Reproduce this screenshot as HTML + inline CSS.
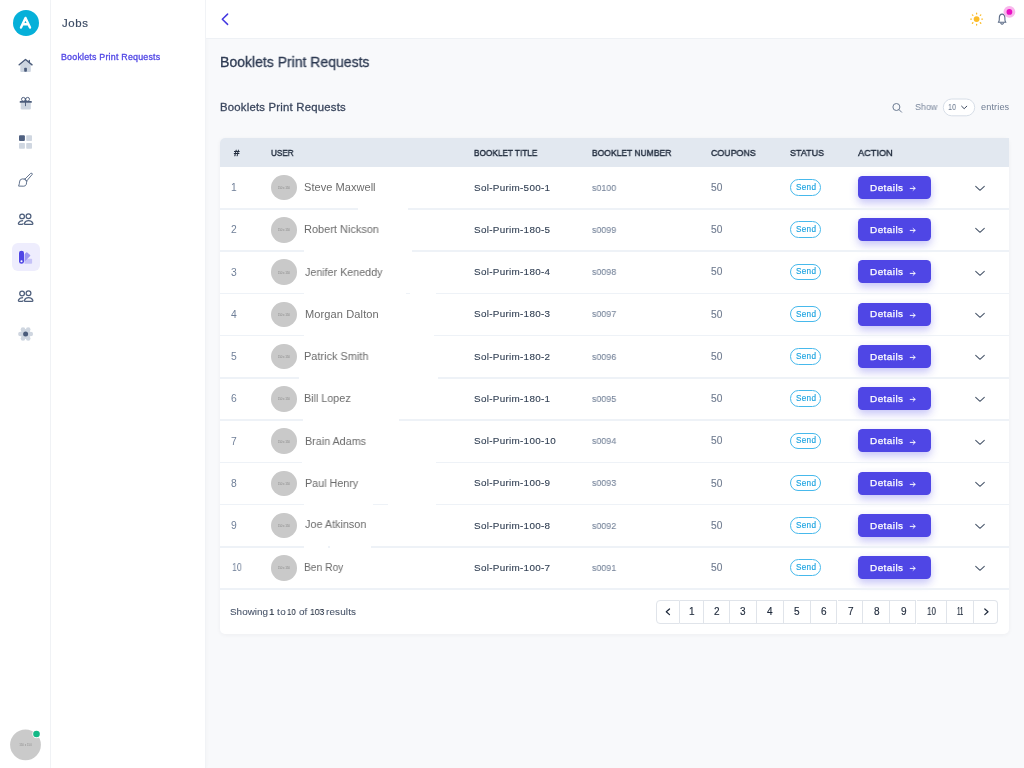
<!DOCTYPE html>
<html><head><meta charset="utf-8"><style>
*{margin:0;padding:0;box-sizing:border-box}
html,body{width:1024px;height:768px;overflow:hidden;background:#f8f9fb;font-family:"Liberation Sans",sans-serif}
.a{position:absolute;white-space:nowrap;will-change:transform}
#rail{position:absolute;left:0;top:0;width:51px;height:768px;background:#fff;border-right:1.5px solid #f1f3f6}
#side{position:absolute;left:51px;top:0;width:155px;height:768px;background:#fff;border-right:1px solid #f1f3f6;box-shadow:1px 0 3px rgba(30,41,59,.025)}
#hdr{position:absolute;left:206px;top:0;width:818px;height:38.5px;background:#fff;border-bottom:1px solid #eef1f5}
.logo{position:absolute;left:12.5px;top:10px;width:26px;height:26px;border-radius:50%;background:#06b0d9}
.act{position:absolute;left:12px;top:243px;width:28px;height:28px;border-radius:6px;background:#eeedfd}
.card{position:absolute;left:220px;top:138px;width:788.5px;height:496px;background:#fff;border-radius:5px;box-shadow:0 1px 4px rgba(30,41,59,.05)}
.th{position:absolute;left:220px;top:138px;width:788.5px;height:28.5px;background:#e2e8f0;border-radius:5px 0 0 0}
.rb{position:absolute;left:220px;width:788.5px;height:1.5px;background:#eef2f7}
.gap{position:absolute;height:3px;background:#fff}
.av{position:absolute;left:271.2px;width:25.6px;height:25.6px;border-radius:50%;background:#c9c9c9}
.badge{position:absolute;left:789.8px;width:31.3px;height:16.7px;border:1px solid #47b9ec;border-radius:9px}
.btn{position:absolute;left:857.5px;width:73px;height:23px;border-radius:4.5px;background:#4f46e5;box-shadow:0 4px 9px rgba(79,70,229,.32)}
.pg{position:absolute;top:599.6px;height:24.2px;border:1px solid #e0e4ea;border-left:0;background:#fff}

</style></head><body>
<div id="rail">
  <div class="logo"></div>
  <div class="act"></div>
</div>
<svg class="a" style="left:0;top:0" width="51" height="768" viewBox="0 0 51 768">
  <!-- A -->
  <path d="M21 27.6L25.5 17.9L30 27.6M22.6 24.2H28.4" stroke="#fff" stroke-width="2.4" fill="none" stroke-linecap="round" stroke-linejoin="round"/>
  <!-- house -->
  <path d="M20.3 65L25.5 60.5L30.8 65V71Q30.8 72 29.8 72H21.3Q20.3 72 20.3 71Z" fill="#cdd5e0"/>
  <path d="M19.2 64.8L25.5 59.5L32 64.8" stroke="#4a5b7a" stroke-width="1.5" fill="none" stroke-linecap="round" stroke-linejoin="round"/>
  <path d="M29.4 60.3V62.6" stroke="#4a5b7a" stroke-width="1.2" stroke-linecap="round"/>
  <rect x="24.2" y="67.8" width="2.7" height="4" rx="0.8" fill="#4a5b7a"/>
  <!-- gift -->
  <path d="M20.7 102.5H30.8V108.3Q30.8 109.5 29.6 109.5H21.9Q20.7 109.5 20.7 108.3Z" fill="#cdd5e0"/>
  <circle cx="23.4" cy="99.3" r="1.9" stroke="#4a5b7a" stroke-width="0.95" fill="none"/>
  <circle cx="27.6" cy="99.3" r="1.9" stroke="#4a5b7a" stroke-width="0.95" fill="none"/>
  <rect x="19.7" y="101" width="12.1" height="1.8" rx="0.5" fill="#4a5b7a"/>
  <rect x="25.1" y="98.3" width="0.9" height="7.8" fill="#4a5b7a"/>
  <!-- grid -->
  <rect x="19" y="135.2" width="5.9" height="5.9" rx="1" fill="#4f6080"/>
  <rect x="26.2" y="135.2" width="5.8" height="5.9" rx="0.8" fill="#d0d7e1"/>
  <rect x="19" y="143" width="5.9" height="5.8" rx="0.8" fill="#d0d7e1"/>
  <rect x="26.2" y="143" width="5.8" height="5.8" rx="0.8" fill="#d0d7e1"/>
  <!-- brush -->
  <path d="M18.6 186.1Q19.6 183.5 19.5 182Q19.6 179.2 22.2 178.9L24.8 179.2L26.5 181.2Q26.7 183 26.3 184.3Q25.6 186.2 23.8 186.2Z" stroke="#5a6b88" stroke-width="0.95" fill="none" stroke-linejoin="round"/>
  <path d="M24.8 179.2L30.6 173.4Q32.3 172.6 32.4 174.2L26.5 181.2" stroke="#5a6b88" stroke-width="0.95" fill="none" stroke-linejoin="round"/>
  <path d="M24.2 178.4L27.2 181.4" stroke="#5a6b88" stroke-width="0.9"/>
  <!-- users -->
  <g stroke="#4e5f7c" stroke-width="1.25" fill="none">
    <circle cx="22.1" cy="216.4" r="2.35"/>
    <circle cx="28.5" cy="216.2" r="2.4"/>
    <path d="M25 224.3H32.2Q33.2 224.3 32.7 223.1Q31.6 220.6 28.5 220.6Q25.5 220.6 24.6 223Q24.2 224.3 25 224.3Z"/>
    <path d="M23.1 220.6Q19.5 220.8 18.5 223.1Q18.1 224.3 19.2 224.3H22.2Q23 224.3 23.1 223.3"/>
  </g>
  <g stroke="#4e5f7c" stroke-width="1.25" fill="none" transform="translate(0,77)">
    <circle cx="22.1" cy="216.4" r="2.35"/>
    <circle cx="28.5" cy="216.2" r="2.4"/>
    <path d="M25 224.3H32.2Q33.2 224.3 32.7 223.1Q31.6 220.6 28.5 220.6Q25.5 220.6 24.6 223Q24.2 224.3 25 224.3Z"/>
    <path d="M23.1 220.6Q19.5 220.8 18.5 223.1Q18.1 224.3 19.2 224.3H22.2Q23 224.3 23.1 223.3"/>
  </g>
  <!-- swatch -->
  <rect x="24.3" y="258.8" width="7.8" height="5" rx="0.8" fill="#c5c2f7"/>
  <path d="M24.3 254.4L26.1 252.5Q26.7 251.9 27.3 252.5L30.1 255.1Q30.6 255.6 30.1 256.1L24.3 262Z" fill="#9d98f1"/>
  <rect x="18.5" y="250.3" width="6" height="14" rx="3" fill="#fff" opacity=".7"/>
  <rect x="19" y="250.8" width="5" height="13" rx="2.3" fill="#4f46e5"/>
  <circle cx="21.5" cy="261.2" r="1.05" fill="#fff"/>
  <!-- gear -->
  <g fill="#cfd6e0">
    <circle cx="25.6" cy="334" r="5"/>
    <circle cx="20.4" cy="334" r="2.3"/><circle cx="30.8" cy="334" r="2.3"/>
    <circle cx="23" cy="329.5" r="2.3"/><circle cx="28.2" cy="329.5" r="2.3"/>
    <circle cx="23" cy="338.5" r="2.3"/><circle cx="28.2" cy="338.5" r="2.3"/>
  </g>
  <circle cx="25.6" cy="334" r="2.5" fill="#4a5b7a"/>
  <!-- avatar bottom -->
  <circle cx="25.5" cy="744.8" r="15.4" fill="#cacaca"/>
  <text x="25.5" y="746" font-size="2.9" fill="#8f8f8f" text-anchor="middle" font-family="Liberation Sans">150 x 150</text>
  <circle cx="36.5" cy="734" r="4.2" fill="#fff"/>
  <circle cx="36.5" cy="734" r="3.3" fill="#12b886"/>
</svg>
<div id="side"></div>
<div id="hdr"></div>
<!-- header icons -->
<svg class="a" style="left:206px;top:0" width="818" height="38" viewBox="206 0 818 38">
  <path d="M227.6 14.1L222.3 19.3L227.6 24.4" stroke="#4338e0" stroke-width="1.5" fill="none" stroke-linecap="round" stroke-linejoin="round"/>
  <g stroke="#fbbc2a" stroke-width="1.3" stroke-linecap="round">
    <path d="M976.6 13.2V13.9M976.6 24.3V25M970.7 19.1H971.4M981.8 19.1H982.5M972.4 14.9L972.9 15.4M980.3 22.8L980.8 23.3M972.4 23.3L972.9 22.8M980.3 15.4L980.8 14.9"/>
  </g>
  <circle cx="976.6" cy="19.1" r="2.9" fill="#fbbc2a"/>
  <path d="M998.3 22.3Q999.3 21.3 999.3 19.5V18.2Q999.3 14.1 1002.1 14.1Q1004.9 14.1 1004.9 18.2V19.5Q1004.9 21.3 1005.9 22.3Z" stroke="#5a6a85" stroke-width="1.1" fill="none" stroke-linejoin="round"/>
  <path d="M1000.8 23.2Q1002.1 25.4 1003.4 23.2" stroke="#5a6a85" stroke-width="1.1" fill="none" stroke-linecap="round"/>
  <circle cx="1009.4" cy="11.9" r="5.9" fill="#f9b6ec"/>
  <circle cx="1009.4" cy="11.9" r="2.9" fill="#ea10c3"/>
</svg>
<!-- search & select -->
<svg class="a" style="left:888px;top:98px" width="90" height="20" viewBox="888 98 90 20">
  <circle cx="896.4" cy="107" r="3.5" stroke="#6b7a91" stroke-width="1" fill="none"/>
  <path d="M899 109.6L901.6 112.2" stroke="#6b7a91" stroke-width="1" stroke-linecap="round"/>
  <rect x="943.3" y="99" width="31.4" height="16.8" rx="8.4" fill="#fff" stroke="#d3dae4" stroke-width="0.9"/>
  <path d="M961.6 106.2L964.2 108.7L966.8 106.2" stroke="#3d4a60" stroke-width="1" fill="none" stroke-linecap="round" stroke-linejoin="round"/>
</svg>
<div class="card"></div>
<div class="th"></div>
<!-- pagination -->
<div class="pg" style="left:655.5px;width:24px;border-left:1px solid #e0e4ea;border-radius:4px 0 0 4px"></div>
<div class="pg" style="left:679.5px;width:24.2px"></div>
<div class="pg" style="left:703.7px;width:26px"></div>
<div class="pg" style="left:729.7px;width:26.9px"></div>
<div class="pg" style="left:756.6px;width:27px"></div>
<div class="pg" style="left:783.6px;width:27.1px"></div>
<div class="pg" style="left:810.7px;width:26.8px"></div>
<div class="pg" style="left:837.5px;width:25.5px"></div>
<div class="pg" style="left:863px;width:26.6px"></div>
<div class="pg" style="left:889.6px;width:26.9px"></div>
<div class="pg" style="left:916.5px;width:30.1px"></div>
<div class="pg" style="left:946.6px;width:27.7px"></div>
<div class="pg" style="left:974.3px;width:24px;border-radius:0 4px 4px 0"></div>
<svg class="a" style="left:655px;top:599px" width="345" height="26" viewBox="655 599 345 26">
  <path d="M669.5 609L666.3 611.8L669.5 614.6" stroke="#1e293b" stroke-width="1.25" fill="none" stroke-linecap="round" stroke-linejoin="round"/>
  <path d="M984.8 609L988 611.8L984.8 614.6" stroke="#1e293b" stroke-width="1.25" fill="none" stroke-linecap="round" stroke-linejoin="round"/>
</svg>

<div class="av" style="top:174.80px"></div><div class="a" style="left:271.2px;width:25.6px;text-align:center;top:186.00px;font-size:3px;line-height:5px;color:#8a8a8a;letter-spacing:-0.1px">150 x 150</div>
<div class="badge" style="top:179.00px"></div>
<div class="btn" style="top:175.90px"></div>
<svg class="a" style="left:907px;top:184.00px" width="10" height="8" viewBox="0 0 10 8"><path d="M3.2 4.4H8.1M6.1 2.5L8.1 4.4L6.1 6.3" stroke="#fff" stroke-width="0.95" fill="none" stroke-linecap="round" stroke-linejoin="round"/></svg>
<svg class="a" style="left:974px;top:183.00px" width="12" height="10" viewBox="0 0 12 10"><path d="M1.7 3.3L6 7.3L10.3 3.3" stroke="#475569" stroke-width="1.05" fill="none" stroke-linecap="round" stroke-linejoin="round"/></svg>
<div class="rb" style="top:208.00px"></div>
<div class="gap" style="top:207.25px;left:358px;width:50.0px"></div>
<div class="av" style="top:217.05px"></div><div class="a" style="left:271.2px;width:25.6px;text-align:center;top:228.25px;font-size:3px;line-height:5px;color:#8a8a8a;letter-spacing:-0.1px">150 x 150</div>
<div class="badge" style="top:221.25px"></div>
<div class="btn" style="top:218.15px"></div>
<svg class="a" style="left:907px;top:226.25px" width="10" height="8" viewBox="0 0 10 8"><path d="M3.2 4.4H8.1M6.1 2.5L8.1 4.4L6.1 6.3" stroke="#fff" stroke-width="0.95" fill="none" stroke-linecap="round" stroke-linejoin="round"/></svg>
<svg class="a" style="left:974px;top:225.25px" width="12" height="10" viewBox="0 0 12 10"><path d="M1.7 3.3L6 7.3L10.3 3.3" stroke="#475569" stroke-width="1.05" fill="none" stroke-linecap="round" stroke-linejoin="round"/></svg>
<div class="rb" style="top:250.25px"></div>
<div class="gap" style="top:249.50px;left:304px;width:108.0px"></div>
<div class="av" style="top:259.30px"></div><div class="a" style="left:271.2px;width:25.6px;text-align:center;top:270.50px;font-size:3px;line-height:5px;color:#8a8a8a;letter-spacing:-0.1px">150 x 150</div>
<div class="badge" style="top:263.50px"></div>
<div class="btn" style="top:260.40px"></div>
<svg class="a" style="left:907px;top:268.50px" width="10" height="8" viewBox="0 0 10 8"><path d="M3.2 4.4H8.1M6.1 2.5L8.1 4.4L6.1 6.3" stroke="#fff" stroke-width="0.95" fill="none" stroke-linecap="round" stroke-linejoin="round"/></svg>
<svg class="a" style="left:974px;top:267.50px" width="12" height="10" viewBox="0 0 12 10"><path d="M1.7 3.3L6 7.3L10.3 3.3" stroke="#475569" stroke-width="1.05" fill="none" stroke-linecap="round" stroke-linejoin="round"/></svg>
<div class="rb" style="top:292.50px"></div>
<div class="gap" style="top:291.75px;left:304px;width:102.4px"></div>
<div class="gap" style="top:291.75px;left:410px;width:26.0px"></div>
<div class="av" style="top:301.55px"></div><div class="a" style="left:271.2px;width:25.6px;text-align:center;top:312.75px;font-size:3px;line-height:5px;color:#8a8a8a;letter-spacing:-0.1px">150 x 150</div>
<div class="badge" style="top:305.75px"></div>
<div class="btn" style="top:302.65px"></div>
<svg class="a" style="left:907px;top:310.75px" width="10" height="8" viewBox="0 0 10 8"><path d="M3.2 4.4H8.1M6.1 2.5L8.1 4.4L6.1 6.3" stroke="#fff" stroke-width="0.95" fill="none" stroke-linecap="round" stroke-linejoin="round"/></svg>
<svg class="a" style="left:974px;top:309.75px" width="12" height="10" viewBox="0 0 12 10"><path d="M1.7 3.3L6 7.3L10.3 3.3" stroke="#475569" stroke-width="1.05" fill="none" stroke-linecap="round" stroke-linejoin="round"/></svg>
<div class="rb" style="top:334.75px"></div>
<div class="gap" style="top:334.00px;left:304px;width:130.0px"></div>
<div class="av" style="top:343.80px"></div><div class="a" style="left:271.2px;width:25.6px;text-align:center;top:355.00px;font-size:3px;line-height:5px;color:#8a8a8a;letter-spacing:-0.1px">150 x 150</div>
<div class="badge" style="top:348.00px"></div>
<div class="btn" style="top:344.90px"></div>
<svg class="a" style="left:907px;top:353.00px" width="10" height="8" viewBox="0 0 10 8"><path d="M3.2 4.4H8.1M6.1 2.5L8.1 4.4L6.1 6.3" stroke="#fff" stroke-width="0.95" fill="none" stroke-linecap="round" stroke-linejoin="round"/></svg>
<svg class="a" style="left:974px;top:352.00px" width="12" height="10" viewBox="0 0 12 10"><path d="M1.7 3.3L6 7.3L10.3 3.3" stroke="#475569" stroke-width="1.05" fill="none" stroke-linecap="round" stroke-linejoin="round"/></svg>
<div class="rb" style="top:377.00px"></div>
<div class="gap" style="top:376.25px;left:298.6px;width:139.4px"></div>
<div class="av" style="top:386.05px"></div><div class="a" style="left:271.2px;width:25.6px;text-align:center;top:397.25px;font-size:3px;line-height:5px;color:#8a8a8a;letter-spacing:-0.1px">150 x 150</div>
<div class="badge" style="top:390.25px"></div>
<div class="btn" style="top:387.15px"></div>
<svg class="a" style="left:907px;top:395.25px" width="10" height="8" viewBox="0 0 10 8"><path d="M3.2 4.4H8.1M6.1 2.5L8.1 4.4L6.1 6.3" stroke="#fff" stroke-width="0.95" fill="none" stroke-linecap="round" stroke-linejoin="round"/></svg>
<svg class="a" style="left:974px;top:394.25px" width="12" height="10" viewBox="0 0 12 10"><path d="M1.7 3.3L6 7.3L10.3 3.3" stroke="#475569" stroke-width="1.05" fill="none" stroke-linecap="round" stroke-linejoin="round"/></svg>
<div class="rb" style="top:419.25px"></div>
<div class="gap" style="top:418.50px;left:303px;width:96.4px"></div>
<div class="av" style="top:428.30px"></div><div class="a" style="left:271.2px;width:25.6px;text-align:center;top:439.50px;font-size:3px;line-height:5px;color:#8a8a8a;letter-spacing:-0.1px">150 x 150</div>
<div class="badge" style="top:432.50px"></div>
<div class="btn" style="top:429.40px"></div>
<svg class="a" style="left:907px;top:437.50px" width="10" height="8" viewBox="0 0 10 8"><path d="M3.2 4.4H8.1M6.1 2.5L8.1 4.4L6.1 6.3" stroke="#fff" stroke-width="0.95" fill="none" stroke-linecap="round" stroke-linejoin="round"/></svg>
<svg class="a" style="left:974px;top:436.50px" width="12" height="10" viewBox="0 0 12 10"><path d="M1.7 3.3L6 7.3L10.3 3.3" stroke="#475569" stroke-width="1.05" fill="none" stroke-linecap="round" stroke-linejoin="round"/></svg>
<div class="rb" style="top:461.50px"></div>
<div class="gap" style="top:460.75px;left:301.7px;width:134.3px"></div>
<div class="av" style="top:470.55px"></div><div class="a" style="left:271.2px;width:25.6px;text-align:center;top:481.75px;font-size:3px;line-height:5px;color:#8a8a8a;letter-spacing:-0.1px">150 x 150</div>
<div class="badge" style="top:474.75px"></div>
<div class="btn" style="top:471.65px"></div>
<svg class="a" style="left:907px;top:479.75px" width="10" height="8" viewBox="0 0 10 8"><path d="M3.2 4.4H8.1M6.1 2.5L8.1 4.4L6.1 6.3" stroke="#fff" stroke-width="0.95" fill="none" stroke-linecap="round" stroke-linejoin="round"/></svg>
<svg class="a" style="left:974px;top:478.75px" width="12" height="10" viewBox="0 0 12 10"><path d="M1.7 3.3L6 7.3L10.3 3.3" stroke="#475569" stroke-width="1.05" fill="none" stroke-linecap="round" stroke-linejoin="round"/></svg>
<div class="rb" style="top:503.75px"></div>
<div class="gap" style="top:503.00px;left:303.75px;width:69.1px"></div>
<div class="gap" style="top:503.00px;left:387.7px;width:48.3px"></div>
<div class="av" style="top:512.80px"></div><div class="a" style="left:271.2px;width:25.6px;text-align:center;top:524.00px;font-size:3px;line-height:5px;color:#8a8a8a;letter-spacing:-0.1px">150 x 150</div>
<div class="badge" style="top:517.00px"></div>
<div class="btn" style="top:513.90px"></div>
<svg class="a" style="left:907px;top:522.00px" width="10" height="8" viewBox="0 0 10 8"><path d="M3.2 4.4H8.1M6.1 2.5L8.1 4.4L6.1 6.3" stroke="#fff" stroke-width="0.95" fill="none" stroke-linecap="round" stroke-linejoin="round"/></svg>
<svg class="a" style="left:974px;top:521.00px" width="12" height="10" viewBox="0 0 12 10"><path d="M1.7 3.3L6 7.3L10.3 3.3" stroke="#475569" stroke-width="1.05" fill="none" stroke-linecap="round" stroke-linejoin="round"/></svg>
<div class="rb" style="top:546.00px"></div>
<div class="gap" style="top:545.25px;left:303.75px;width:23.8px"></div>
<div class="gap" style="top:545.25px;left:330px;width:40.5px"></div>
<div class="av" style="top:555.05px"></div><div class="a" style="left:271.2px;width:25.6px;text-align:center;top:566.25px;font-size:3px;line-height:5px;color:#8a8a8a;letter-spacing:-0.1px">150 x 150</div>
<div class="badge" style="top:559.25px"></div>
<div class="btn" style="top:556.15px"></div>
<svg class="a" style="left:907px;top:564.25px" width="10" height="8" viewBox="0 0 10 8"><path d="M3.2 4.4H8.1M6.1 2.5L8.1 4.4L6.1 6.3" stroke="#fff" stroke-width="0.95" fill="none" stroke-linecap="round" stroke-linejoin="round"/></svg>
<svg class="a" style="left:974px;top:563.25px" width="12" height="10" viewBox="0 0 12 10"><path d="M1.7 3.3L6 7.3L10.3 3.3" stroke="#475569" stroke-width="1.05" fill="none" stroke-linecap="round" stroke-linejoin="round"/></svg>
<div class="rb" style="top:588.25px"></div>
<div class="a" style="left:61.60px;top:15.65px;font-size:11.41px;line-height:14px;letter-spacing:0.602px;color:#3b4a63;font-weight:normal;-webkit-text-stroke:0.20px #3b4a63;">Jobs</div>
<div class="a" style="left:61.00px;top:52.23px;font-size:8.87px;line-height:11px;letter-spacing:0.210px;color:#5046e5;font-weight:normal;-webkit-text-stroke:0.30px #5046e5;">Booklets Print Requests</div>
<div class="a" style="left:219.81px;top:53.81px;font-size:14.10px;line-height:17px;letter-spacing:0.000px;color:#2d3a52;font-weight:normal;transform:scaleX(0.9940);transform-origin:0 0;-webkit-text-stroke:0.30px #2d3a52;">Booklets Print Requests</div>
<div class="a" style="left:219.60px;top:99.97px;font-size:11.34px;line-height:14px;letter-spacing:0.218px;color:#3b475e;font-weight:normal;-webkit-text-stroke:0.30px #3b475e;">Booklets Print Requests</div>
<div class="a" style="left:915.01px;top:100.83px;font-size:9.16px;line-height:12px;letter-spacing:0.000px;color:#7a879c;font-weight:normal;transform:scaleX(0.9739);transform-origin:0 0;">Show</div>
<div class="a" style="left:948.22px;top:100.83px;font-size:9.16px;line-height:12px;letter-spacing:0.000px;color:#6b7a90;font-weight:normal;transform:scaleX(0.8072);transform-origin:0 0;">10</div>
<div class="a" style="left:980.50px;top:100.83px;font-size:9.16px;line-height:12px;letter-spacing:0.117px;color:#6f7d93;font-weight:normal;">entries</div>
<div class="a" style="left:234.10px;top:146.53px;font-size:9.74px;line-height:12px;letter-spacing:0.000px;color:#1e293b;font-weight:normal;-webkit-text-stroke:0.40px #1e293b;">#</div>
<div class="a" style="left:271.12px;top:146.53px;font-size:9.74px;line-height:12px;letter-spacing:0.000px;color:#1e293b;font-weight:normal;transform:scaleX(0.8333);transform-origin:0 0;-webkit-text-stroke:0.40px #1e293b;">USER</div>
<div class="a" style="left:473.81px;top:146.53px;font-size:9.74px;line-height:12px;letter-spacing:0.000px;color:#1e293b;font-weight:normal;transform:scaleX(0.8473);transform-origin:0 0;-webkit-text-stroke:0.40px #1e293b;">BOOKLET TITLE</div>
<div class="a" style="left:592.09px;top:146.53px;font-size:9.74px;line-height:12px;letter-spacing:0.000px;color:#1e293b;font-weight:normal;transform:scaleX(0.8745);transform-origin:0 0;-webkit-text-stroke:0.40px #1e293b;">BOOKLET NUMBER</div>
<div class="a" style="left:710.54px;top:146.53px;font-size:9.74px;line-height:12px;letter-spacing:0.000px;color:#1e293b;font-weight:normal;transform:scaleX(0.9084);transform-origin:0 0;-webkit-text-stroke:0.40px #1e293b;">COUPONS</div>
<div class="a" style="left:790.13px;top:146.53px;font-size:9.74px;line-height:12px;letter-spacing:0.000px;color:#1e293b;font-weight:normal;transform:scaleX(0.9206);transform-origin:0 0;-webkit-text-stroke:0.40px #1e293b;">STATUS</div>
<div class="a" style="left:857.80px;top:146.53px;font-size:9.74px;line-height:12px;letter-spacing:0.000px;color:#1e293b;font-weight:normal;transform:scaleX(0.9430);transform-origin:0 0;-webkit-text-stroke:0.40px #1e293b;">ACTION</div>
<div class="a" style="left:303.50px;top:179.97px;font-size:11.05px;line-height:14px;letter-spacing:0.029px;color:#6b6b6b;font-weight:normal;">Steve Maxwell</div>
<div class="a" style="left:231.15px;top:181.02px;font-size:10.32px;line-height:13px;letter-spacing:0.000px;color:#6f7f98;font-weight:normal;">1</div>
<div class="a" style="left:474.00px;top:181.68px;font-size:9.88px;line-height:12px;letter-spacing:0.296px;color:#334155;font-weight:normal;-webkit-text-stroke:0.12px #334155;">Sol-Purim-500-1</div>
<div class="a" style="left:591.92px;top:181.50px;font-size:9.80px;line-height:12px;letter-spacing:0.000px;color:#76849a;font-weight:normal;transform:scaleX(0.9063);transform-origin:0 0;-webkit-text-stroke:0.10px #76849a;">s0100</div>
<div class="a" style="left:710.50px;top:180.87px;font-size:10.20px;line-height:13px;letter-spacing:0.000px;color:#717d91;font-weight:normal;-webkit-text-stroke:0.15px #717d91;">50</div>
<div class="a" style="left:795.70px;top:181.96px;font-size:8.20px;line-height:11px;letter-spacing:0.303px;color:#1ca3e0;font-weight:normal;-webkit-text-stroke:0.15px #1ca3e0;">Send</div>
<div class="a" style="left:869.50px;top:181.65px;font-size:9.96px;line-height:12px;letter-spacing:0.442px;color:#ffffff;font-weight:normal;-webkit-text-stroke:0.25px #ffffff;">Details</div>
<div class="a" style="left:303.51px;top:222.17px;font-size:11.05px;line-height:14px;letter-spacing:0.000px;color:#6b6b6b;font-weight:normal;transform:scaleX(0.9924);transform-origin:0 0;">Robert Nickson</div>
<div class="a" style="left:231.25px;top:223.27px;font-size:10.32px;line-height:13px;letter-spacing:0.000px;color:#6f7f98;font-weight:normal;">2</div>
<div class="a" style="left:474.00px;top:223.93px;font-size:9.88px;line-height:12px;letter-spacing:0.296px;color:#334155;font-weight:normal;-webkit-text-stroke:0.12px #334155;">Sol-Purim-180-5</div>
<div class="a" style="left:591.92px;top:223.75px;font-size:9.80px;line-height:12px;letter-spacing:0.000px;color:#76849a;font-weight:normal;transform:scaleX(0.9063);transform-origin:0 0;-webkit-text-stroke:0.10px #76849a;">s0099</div>
<div class="a" style="left:710.50px;top:223.12px;font-size:10.20px;line-height:13px;letter-spacing:0.000px;color:#717d91;font-weight:normal;-webkit-text-stroke:0.15px #717d91;">50</div>
<div class="a" style="left:795.70px;top:224.21px;font-size:8.20px;line-height:11px;letter-spacing:0.303px;color:#1ca3e0;font-weight:normal;-webkit-text-stroke:0.15px #1ca3e0;">Send</div>
<div class="a" style="left:869.50px;top:223.90px;font-size:9.96px;line-height:12px;letter-spacing:0.442px;color:#ffffff;font-weight:normal;-webkit-text-stroke:0.25px #ffffff;">Details</div>
<div class="a" style="left:304.70px;top:264.97px;font-size:11.05px;line-height:14px;letter-spacing:0.000px;color:#6b6b6b;font-weight:normal;transform:scaleX(0.9699);transform-origin:0 0;">Jenifer Keneddy</div>
<div class="a" style="left:231.35px;top:265.52px;font-size:10.32px;line-height:13px;letter-spacing:0.000px;color:#6f7f98;font-weight:normal;">3</div>
<div class="a" style="left:474.00px;top:266.18px;font-size:9.88px;line-height:12px;letter-spacing:0.296px;color:#334155;font-weight:normal;-webkit-text-stroke:0.12px #334155;">Sol-Purim-180-4</div>
<div class="a" style="left:591.92px;top:266.00px;font-size:9.80px;line-height:12px;letter-spacing:0.000px;color:#76849a;font-weight:normal;transform:scaleX(0.9063);transform-origin:0 0;-webkit-text-stroke:0.10px #76849a;">s0098</div>
<div class="a" style="left:710.50px;top:265.37px;font-size:10.20px;line-height:13px;letter-spacing:0.000px;color:#717d91;font-weight:normal;-webkit-text-stroke:0.15px #717d91;">50</div>
<div class="a" style="left:795.70px;top:266.46px;font-size:8.20px;line-height:11px;letter-spacing:0.303px;color:#1ca3e0;font-weight:normal;-webkit-text-stroke:0.15px #1ca3e0;">Send</div>
<div class="a" style="left:869.50px;top:266.15px;font-size:9.96px;line-height:12px;letter-spacing:0.442px;color:#ffffff;font-weight:normal;-webkit-text-stroke:0.25px #ffffff;">Details</div>
<div class="a" style="left:304.70px;top:306.67px;font-size:11.05px;line-height:14px;letter-spacing:0.108px;color:#6b6b6b;font-weight:normal;">Morgan Dalton</div>
<div class="a" style="left:231.30px;top:307.77px;font-size:10.32px;line-height:13px;letter-spacing:0.000px;color:#6f7f98;font-weight:normal;">4</div>
<div class="a" style="left:474.00px;top:308.43px;font-size:9.88px;line-height:12px;letter-spacing:0.296px;color:#334155;font-weight:normal;-webkit-text-stroke:0.12px #334155;">Sol-Purim-180-3</div>
<div class="a" style="left:591.92px;top:308.25px;font-size:9.80px;line-height:12px;letter-spacing:0.000px;color:#76849a;font-weight:normal;transform:scaleX(0.9063);transform-origin:0 0;-webkit-text-stroke:0.10px #76849a;">s0097</div>
<div class="a" style="left:710.50px;top:307.62px;font-size:10.20px;line-height:13px;letter-spacing:0.000px;color:#717d91;font-weight:normal;-webkit-text-stroke:0.15px #717d91;">50</div>
<div class="a" style="left:795.70px;top:308.71px;font-size:8.20px;line-height:11px;letter-spacing:0.303px;color:#1ca3e0;font-weight:normal;-webkit-text-stroke:0.15px #1ca3e0;">Send</div>
<div class="a" style="left:869.50px;top:308.40px;font-size:9.96px;line-height:12px;letter-spacing:0.442px;color:#ffffff;font-weight:normal;-webkit-text-stroke:0.25px #ffffff;">Details</div>
<div class="a" style="left:303.51px;top:348.87px;font-size:11.05px;line-height:14px;letter-spacing:0.000px;color:#6b6b6b;font-weight:normal;transform:scaleX(0.9903);transform-origin:0 0;">Patrick Smith</div>
<div class="a" style="left:231.25px;top:350.02px;font-size:10.32px;line-height:13px;letter-spacing:0.000px;color:#6f7f98;font-weight:normal;">5</div>
<div class="a" style="left:474.00px;top:350.68px;font-size:9.88px;line-height:12px;letter-spacing:0.296px;color:#334155;font-weight:normal;-webkit-text-stroke:0.12px #334155;">Sol-Purim-180-2</div>
<div class="a" style="left:591.92px;top:350.50px;font-size:9.80px;line-height:12px;letter-spacing:0.000px;color:#76849a;font-weight:normal;transform:scaleX(0.9063);transform-origin:0 0;-webkit-text-stroke:0.10px #76849a;">s0096</div>
<div class="a" style="left:710.50px;top:349.87px;font-size:10.20px;line-height:13px;letter-spacing:0.000px;color:#717d91;font-weight:normal;-webkit-text-stroke:0.15px #717d91;">50</div>
<div class="a" style="left:795.70px;top:350.96px;font-size:8.20px;line-height:11px;letter-spacing:0.303px;color:#1ca3e0;font-weight:normal;-webkit-text-stroke:0.15px #1ca3e0;">Send</div>
<div class="a" style="left:869.50px;top:350.65px;font-size:9.96px;line-height:12px;letter-spacing:0.442px;color:#ffffff;font-weight:normal;-webkit-text-stroke:0.25px #ffffff;">Details</div>
<div class="a" style="left:303.62px;top:390.87px;font-size:11.05px;line-height:14px;letter-spacing:0.000px;color:#6b6b6b;font-weight:normal;transform:scaleX(0.9727);transform-origin:0 0;">Bill Lopez</div>
<div class="a" style="left:231.25px;top:392.27px;font-size:10.32px;line-height:13px;letter-spacing:0.000px;color:#6f7f98;font-weight:normal;">6</div>
<div class="a" style="left:474.00px;top:392.93px;font-size:9.88px;line-height:12px;letter-spacing:0.296px;color:#334155;font-weight:normal;-webkit-text-stroke:0.12px #334155;">Sol-Purim-180-1</div>
<div class="a" style="left:591.92px;top:392.75px;font-size:9.80px;line-height:12px;letter-spacing:0.000px;color:#76849a;font-weight:normal;transform:scaleX(0.9063);transform-origin:0 0;-webkit-text-stroke:0.10px #76849a;">s0095</div>
<div class="a" style="left:710.50px;top:392.12px;font-size:10.20px;line-height:13px;letter-spacing:0.000px;color:#717d91;font-weight:normal;-webkit-text-stroke:0.15px #717d91;">50</div>
<div class="a" style="left:795.70px;top:393.21px;font-size:8.20px;line-height:11px;letter-spacing:0.303px;color:#1ca3e0;font-weight:normal;-webkit-text-stroke:0.15px #1ca3e0;">Send</div>
<div class="a" style="left:869.50px;top:392.90px;font-size:9.96px;line-height:12px;letter-spacing:0.442px;color:#ffffff;font-weight:normal;-webkit-text-stroke:0.25px #ffffff;">Details</div>
<div class="a" style="left:304.72px;top:433.87px;font-size:11.05px;line-height:14px;letter-spacing:0.000px;color:#6b6b6b;font-weight:normal;transform:scaleX(0.9741);transform-origin:0 0;">Brain Adams</div>
<div class="a" style="left:231.25px;top:434.52px;font-size:10.32px;line-height:13px;letter-spacing:0.000px;color:#6f7f98;font-weight:normal;">7</div>
<div class="a" style="left:474.00px;top:435.18px;font-size:9.88px;line-height:12px;letter-spacing:0.296px;color:#334155;font-weight:normal;-webkit-text-stroke:0.12px #334155;">Sol-Purim-100-10</div>
<div class="a" style="left:591.92px;top:435.00px;font-size:9.80px;line-height:12px;letter-spacing:0.000px;color:#76849a;font-weight:normal;transform:scaleX(0.9063);transform-origin:0 0;-webkit-text-stroke:0.10px #76849a;">s0094</div>
<div class="a" style="left:710.50px;top:434.37px;font-size:10.20px;line-height:13px;letter-spacing:0.000px;color:#717d91;font-weight:normal;-webkit-text-stroke:0.15px #717d91;">50</div>
<div class="a" style="left:795.70px;top:435.46px;font-size:8.20px;line-height:11px;letter-spacing:0.303px;color:#1ca3e0;font-weight:normal;-webkit-text-stroke:0.15px #1ca3e0;">Send</div>
<div class="a" style="left:869.50px;top:435.15px;font-size:9.96px;line-height:12px;letter-spacing:0.442px;color:#ffffff;font-weight:normal;-webkit-text-stroke:0.25px #ffffff;">Details</div>
<div class="a" style="left:304.72px;top:475.87px;font-size:11.05px;line-height:14px;letter-spacing:0.000px;color:#6b6b6b;font-weight:normal;transform:scaleX(0.9737);transform-origin:0 0;">Paul Henry</div>
<div class="a" style="left:231.30px;top:476.77px;font-size:10.32px;line-height:13px;letter-spacing:0.000px;color:#6f7f98;font-weight:normal;">8</div>
<div class="a" style="left:474.00px;top:477.43px;font-size:9.88px;line-height:12px;letter-spacing:0.296px;color:#334155;font-weight:normal;-webkit-text-stroke:0.12px #334155;">Sol-Purim-100-9</div>
<div class="a" style="left:591.92px;top:477.25px;font-size:9.80px;line-height:12px;letter-spacing:0.000px;color:#76849a;font-weight:normal;transform:scaleX(0.9063);transform-origin:0 0;-webkit-text-stroke:0.10px #76849a;">s0093</div>
<div class="a" style="left:710.50px;top:476.62px;font-size:10.20px;line-height:13px;letter-spacing:0.000px;color:#717d91;font-weight:normal;-webkit-text-stroke:0.15px #717d91;">50</div>
<div class="a" style="left:795.70px;top:477.71px;font-size:8.20px;line-height:11px;letter-spacing:0.303px;color:#1ca3e0;font-weight:normal;-webkit-text-stroke:0.15px #1ca3e0;">Send</div>
<div class="a" style="left:869.50px;top:477.40px;font-size:9.96px;line-height:12px;letter-spacing:0.442px;color:#ffffff;font-weight:normal;-webkit-text-stroke:0.25px #ffffff;">Details</div>
<div class="a" style="left:304.70px;top:517.17px;font-size:11.05px;line-height:14px;letter-spacing:0.000px;color:#6b6b6b;font-weight:normal;transform:scaleX(0.9792);transform-origin:0 0;">Joe Atkinson</div>
<div class="a" style="left:231.30px;top:519.02px;font-size:10.32px;line-height:13px;letter-spacing:0.000px;color:#6f7f98;font-weight:normal;">9</div>
<div class="a" style="left:474.00px;top:519.68px;font-size:9.88px;line-height:12px;letter-spacing:0.296px;color:#334155;font-weight:normal;-webkit-text-stroke:0.12px #334155;">Sol-Purim-100-8</div>
<div class="a" style="left:591.92px;top:519.50px;font-size:9.80px;line-height:12px;letter-spacing:0.000px;color:#76849a;font-weight:normal;transform:scaleX(0.9063);transform-origin:0 0;-webkit-text-stroke:0.10px #76849a;">s0092</div>
<div class="a" style="left:710.50px;top:518.87px;font-size:10.20px;line-height:13px;letter-spacing:0.000px;color:#717d91;font-weight:normal;-webkit-text-stroke:0.15px #717d91;">50</div>
<div class="a" style="left:795.70px;top:519.96px;font-size:8.20px;line-height:11px;letter-spacing:0.303px;color:#1ca3e0;font-weight:normal;-webkit-text-stroke:0.15px #1ca3e0;">Send</div>
<div class="a" style="left:869.50px;top:519.65px;font-size:9.96px;line-height:12px;letter-spacing:0.442px;color:#ffffff;font-weight:normal;-webkit-text-stroke:0.25px #ffffff;">Details</div>
<div class="a" style="left:303.56px;top:559.87px;font-size:11.05px;line-height:14px;letter-spacing:0.000px;color:#6b6b6b;font-weight:normal;transform:scaleX(0.9292);transform-origin:0 0;">Ben Roy</div>
<div class="a" style="left:231.81px;top:561.27px;font-size:10.32px;line-height:13px;letter-spacing:0.000px;color:#6f7f98;font-weight:normal;transform:scaleX(0.8430);transform-origin:0 0;">10</div>
<div class="a" style="left:474.00px;top:561.93px;font-size:9.88px;line-height:12px;letter-spacing:0.296px;color:#334155;font-weight:normal;-webkit-text-stroke:0.12px #334155;">Sol-Purim-100-7</div>
<div class="a" style="left:591.92px;top:561.75px;font-size:9.80px;line-height:12px;letter-spacing:0.000px;color:#76849a;font-weight:normal;transform:scaleX(0.9063);transform-origin:0 0;-webkit-text-stroke:0.10px #76849a;">s0091</div>
<div class="a" style="left:710.50px;top:561.12px;font-size:10.20px;line-height:13px;letter-spacing:0.000px;color:#717d91;font-weight:normal;-webkit-text-stroke:0.15px #717d91;">50</div>
<div class="a" style="left:795.70px;top:562.21px;font-size:8.20px;line-height:11px;letter-spacing:0.303px;color:#1ca3e0;font-weight:normal;-webkit-text-stroke:0.15px #1ca3e0;">Send</div>
<div class="a" style="left:869.50px;top:561.90px;font-size:9.96px;line-height:12px;letter-spacing:0.442px;color:#ffffff;font-weight:normal;-webkit-text-stroke:0.25px #ffffff;">Details</div>
<div class="a" style="left:230.20px;top:605.68px;font-size:9.88px;line-height:12px;letter-spacing:0.031px;color:#4a566b;font-weight:normal;-webkit-text-stroke:0.10px #4a566b;">Showing</div>
<div class="a" style="left:269.25px;top:605.68px;font-size:9.88px;line-height:12px;letter-spacing:0.000px;color:#1e293b;font-weight:normal;-webkit-text-stroke:0.10px #1e293b;">1</div>
<div class="a" style="left:276.80px;top:605.68px;font-size:9.88px;line-height:12px;letter-spacing:0.454px;color:#4a566b;font-weight:normal;-webkit-text-stroke:0.10px #4a566b;">to</div>
<div class="a" style="left:287.35px;top:605.68px;font-size:9.88px;line-height:12px;letter-spacing:0.000px;color:#1e293b;font-weight:normal;transform:scaleX(0.7903);transform-origin:0 0;-webkit-text-stroke:0.10px #1e293b;">10</div>
<div class="a" style="left:299.20px;top:605.68px;font-size:9.88px;line-height:12px;letter-spacing:0.000px;color:#4a566b;font-weight:normal;transform:scaleX(0.9878);transform-origin:0 0;-webkit-text-stroke:0.10px #4a566b;">of</div>
<div class="a" style="left:309.90px;top:605.68px;font-size:9.88px;line-height:12px;letter-spacing:0.000px;color:#1e293b;font-weight:normal;transform:scaleX(0.8640);transform-origin:0 0;-webkit-text-stroke:0.10px #1e293b;">103</div>
<div class="a" style="left:326.30px;top:605.68px;font-size:9.88px;line-height:12px;letter-spacing:0.156px;color:#4a566b;font-weight:normal;-webkit-text-stroke:0.10px #4a566b;">results</div>
<div class="a" style="left:688.75px;top:605.12px;font-size:10.03px;line-height:13px;letter-spacing:0.000px;color:#1e293b;font-weight:normal;-webkit-text-stroke:0.15px #1e293b;">1</div>
<div class="a" style="left:714.20px;top:605.12px;font-size:10.03px;line-height:13px;letter-spacing:0.000px;color:#1e293b;font-weight:normal;-webkit-text-stroke:0.15px #1e293b;">2</div>
<div class="a" style="left:740.45px;top:605.12px;font-size:10.03px;line-height:13px;letter-spacing:0.000px;color:#1e293b;font-weight:normal;-webkit-text-stroke:0.15px #1e293b;">3</div>
<div class="a" style="left:767.35px;top:605.12px;font-size:10.03px;line-height:13px;letter-spacing:0.000px;color:#1e293b;font-weight:normal;-webkit-text-stroke:0.15px #1e293b;">4</div>
<div class="a" style="left:793.95px;top:605.12px;font-size:10.03px;line-height:13px;letter-spacing:0.000px;color:#1e293b;font-weight:normal;-webkit-text-stroke:0.15px #1e293b;">5</div>
<div class="a" style="left:820.85px;top:605.12px;font-size:10.03px;line-height:13px;letter-spacing:0.000px;color:#1e293b;font-weight:normal;-webkit-text-stroke:0.15px #1e293b;">6</div>
<div class="a" style="left:847.55px;top:605.12px;font-size:10.03px;line-height:13px;letter-spacing:0.000px;color:#1e293b;font-weight:normal;-webkit-text-stroke:0.15px #1e293b;">7</div>
<div class="a" style="left:873.80px;top:605.12px;font-size:10.03px;line-height:13px;letter-spacing:0.000px;color:#1e293b;font-weight:normal;-webkit-text-stroke:0.15px #1e293b;">8</div>
<div class="a" style="left:900.75px;top:605.12px;font-size:10.03px;line-height:13px;letter-spacing:0.000px;color:#1e293b;font-weight:normal;-webkit-text-stroke:0.15px #1e293b;">9</div>
<div class="a" style="left:927.23px;top:605.12px;font-size:10.03px;line-height:13px;letter-spacing:0.000px;color:#1e293b;font-weight:normal;transform:scaleX(0.8137);transform-origin:0 0;-webkit-text-stroke:0.15px #1e293b;">10</div>
<div class="a" style="left:957.48px;top:605.12px;font-size:10.03px;line-height:13px;letter-spacing:0.000px;color:#1e293b;font-weight:normal;transform:scaleX(0.6065);transform-origin:0 0;-webkit-text-stroke:0.15px #1e293b;">11</div>
</body></html>
